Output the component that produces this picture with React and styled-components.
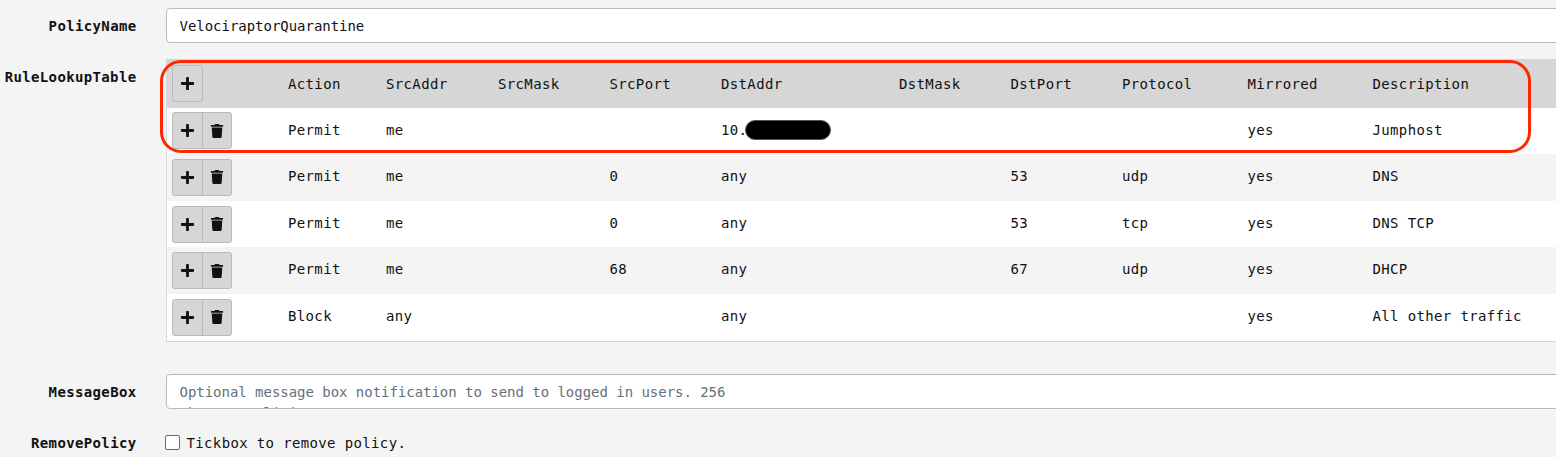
import React from "react";
import styled, { createGlobalStyle } from "styled-components";
import { FaPlus, FaTrash } from "react-icons/fa";

const GlobalStyle = createGlobalStyle`
  *, *::before, *::after { box-sizing: border-box; }
  body {
    margin: 0;
    background: #f4f4f4;
    color: #111;
    font: 14px/21px "DejaVu Sans Mono", "Liberation Mono", monospace;
    letter-spacing: 0.36px;
    overflow: hidden;
  }
`;

const Form = styled.form`
  position: relative;
  width: 1556px;
  height: 457px;
  overflow: hidden;
  padding-top: 8px;
`;

const FormRow = styled.div`
  display: grid;
  grid-template-columns: 136.5px 1500px;
  column-gap: 29.5px;
  align-items: start;
  margin-bottom: ${(p) => p.$gap || 0}px;
`;

const Label = styled.label`
  padding-top: ${(p) => p.$top ?? 8}px;
  font-weight: 700;
  text-align: right;
  white-space: nowrap;
`;

const fieldStyles = `
  display: block;
  width: 1500px;
  height: 35px;
  margin: 0;
  border: 1px solid #b9b9b9;
  border-radius: 4px;
  background: #fff;
  color: #111;
  font: inherit;
  letter-spacing: -0.03px;
  outline: none;
`;

const TextInput = styled.input`
  ${fieldStyles}
  padding: 6px 12.5px;
`;

const TextArea = styled.textarea`
  ${fieldStyles}
  padding: 7px 12.5px 5px;
  resize: none;
  overflow: hidden;
  &::placeholder { color: #66707a; opacity: 1; }
`;

const Table = styled.div`
  width: 1500px;
  background: #fff;
  border-bottom: 1px solid #d5d5d5;
`;

const TableRow = styled.div`
  display: grid;
  grid-template-columns: 116px 98px 112px 111.5px 111.5px 178px 111.5px 111.5px 125.5px 125px 1fr;
  align-items: center;
  height: ${(p) => (p.$header ? 48.6 : 46.6)}px;
  padding-left: 5px;
  border-left: 1px solid ${(p) => (p.$header ? "#d6d6d6" : "#d5dbe0")};
  background: ${(p) => (p.$header ? "#d6d6d6" : p.$striped ? "#f4f4f4" : "#fff")};
`;

const Cell = styled.span`
  display: flex;
  align-items: center;
  white-space: nowrap;
  padding-top: ${(p) => (p.$header ? 2 : 0)}px;
  padding-bottom: ${(p) => (p.$header ? 0 : 1.6)}px;
`;

const ButtonGroup = styled.div`
  display: flex;
  align-self: start;
  margin-top: ${(p) => (p.$header ? 6 : 4.8)}px;
`;

const ToolButton = styled.button`
  display: flex;
  align-items: center;
  justify-content: center;
  width: 31px;
  height: 37px;
  margin: 0;
  padding: 0;
  border: 1px solid #b9b9b9;
  border-radius: 3px;
  background: #d6d6d6;
  color: #111;
  font-size: 14px;
  &:not(:last-child) { border-radius: 3px 0 0 3px; }
  & + & {
    width: 30px;
    margin-left: -1px;
    border-radius: 0 3px 3px 0;
  }
`;

const PlusIcon = styled(FaPlus)`
  width: 15px;
  height: 15px;
`;

const Redaction = styled.span`
  width: 86px;
  height: 20px;
  margin: 0 0 0 -2px;
  border: 1px solid #555;
  border-radius: 10px;
  background: #000;
`;

const CheckRow = styled.div`
  display: flex;
  align-items: center;
  gap: 6.5px;
  margin-left: -1px;
`;

const Checkbox = styled.input`
  appearance: none;
  width: 15px;
  height: 15px;
  margin: 0 0 2px;
  border: 1px solid #6b6b6b;
  border-radius: 2px;
  background: #fff;
`;

const Highlight = styled.div`
  position: absolute;
  left: 160px;
  top: 59.5px;
  width: 1370.5px;
  height: 93px;
  border: 3px solid #ff2600;
  border-radius: 21px;
  pointer-events: none;
`;

const columns = [
  "Action", "SrcAddr", "SrcMask", "SrcPort", "DstAddr",
  "DstMask", "DstPort", "Protocol", "Mirrored", "Description",
];

const rules = [
  { Action: "Permit", SrcAddr: "me", DstAddr: "10.", redacted: true, Mirrored: "yes", Description: "Jumphost" },
  { Action: "Permit", SrcAddr: "me", SrcPort: "0", DstAddr: "any", DstPort: "53", Protocol: "udp", Mirrored: "yes", Description: "DNS" },
  { Action: "Permit", SrcAddr: "me", SrcPort: "0", DstAddr: "any", DstPort: "53", Protocol: "tcp", Mirrored: "yes", Description: "DNS TCP" },
  { Action: "Permit", SrcAddr: "me", SrcPort: "68", DstAddr: "any", DstPort: "67", Protocol: "udp", Mirrored: "yes", Description: "DHCP" },
  { Action: "Block", SrcAddr: "any", DstAddr: "any", Mirrored: "yes", Description: "All other traffic" },
];

function RuleTable() {
  return (
    <Table>
      <TableRow $header>
        <ButtonGroup $header>
          <ToolButton type="button" aria-label="Add rule"><PlusIcon /></ToolButton>
        </ButtonGroup>
        {columns.map((name) => <Cell $header key={name}>{name}</Cell>)}
      </TableRow>
      {rules.map((rule, i) => (
        <TableRow key={i} $striped={i % 2 === 1}>
          <ButtonGroup>
            <ToolButton type="button" aria-label="Add rule"><PlusIcon /></ToolButton>
            <ToolButton type="button" aria-label="Delete rule"><FaTrash /></ToolButton>
          </ButtonGroup>
          {columns.map((name) => (
            <Cell key={name}>
              {rule[name]}
              {name === "DstAddr" && rule.redacted && <Redaction />}
            </Cell>
          ))}
        </TableRow>
      ))}
    </Table>
  );
}

export default function App() {
  return (
    <>
      <GlobalStyle />
      <Form>
        <FormRow $gap={16}>
          <Label htmlFor="policy">PolicyName</Label>
          <TextInput id="policy" defaultValue="VelociraptorQuarantine" />
        </FormRow>
        <FormRow $gap={32.4}>
          <Label as="span">RuleLookupTable</Label>
          <RuleTable />
        </FormRow>
        <FormRow $gap={24}>
          <Label htmlFor="message">MessageBox</Label>
          <TextArea
            id="message"
            placeholder={"Optional message box notification to send to logged in users. 256\ncharacter limit"}
          />
        </FormRow>
        <FormRow>
          <Label $top={0} htmlFor="remove">RemovePolicy</Label>
          <CheckRow>
            <Checkbox type="checkbox" id="remove" />
            <span>Tickbox to remove policy.</span>
          </CheckRow>
        </FormRow>
        <Highlight />
      </Form>
    </>
  );
}
